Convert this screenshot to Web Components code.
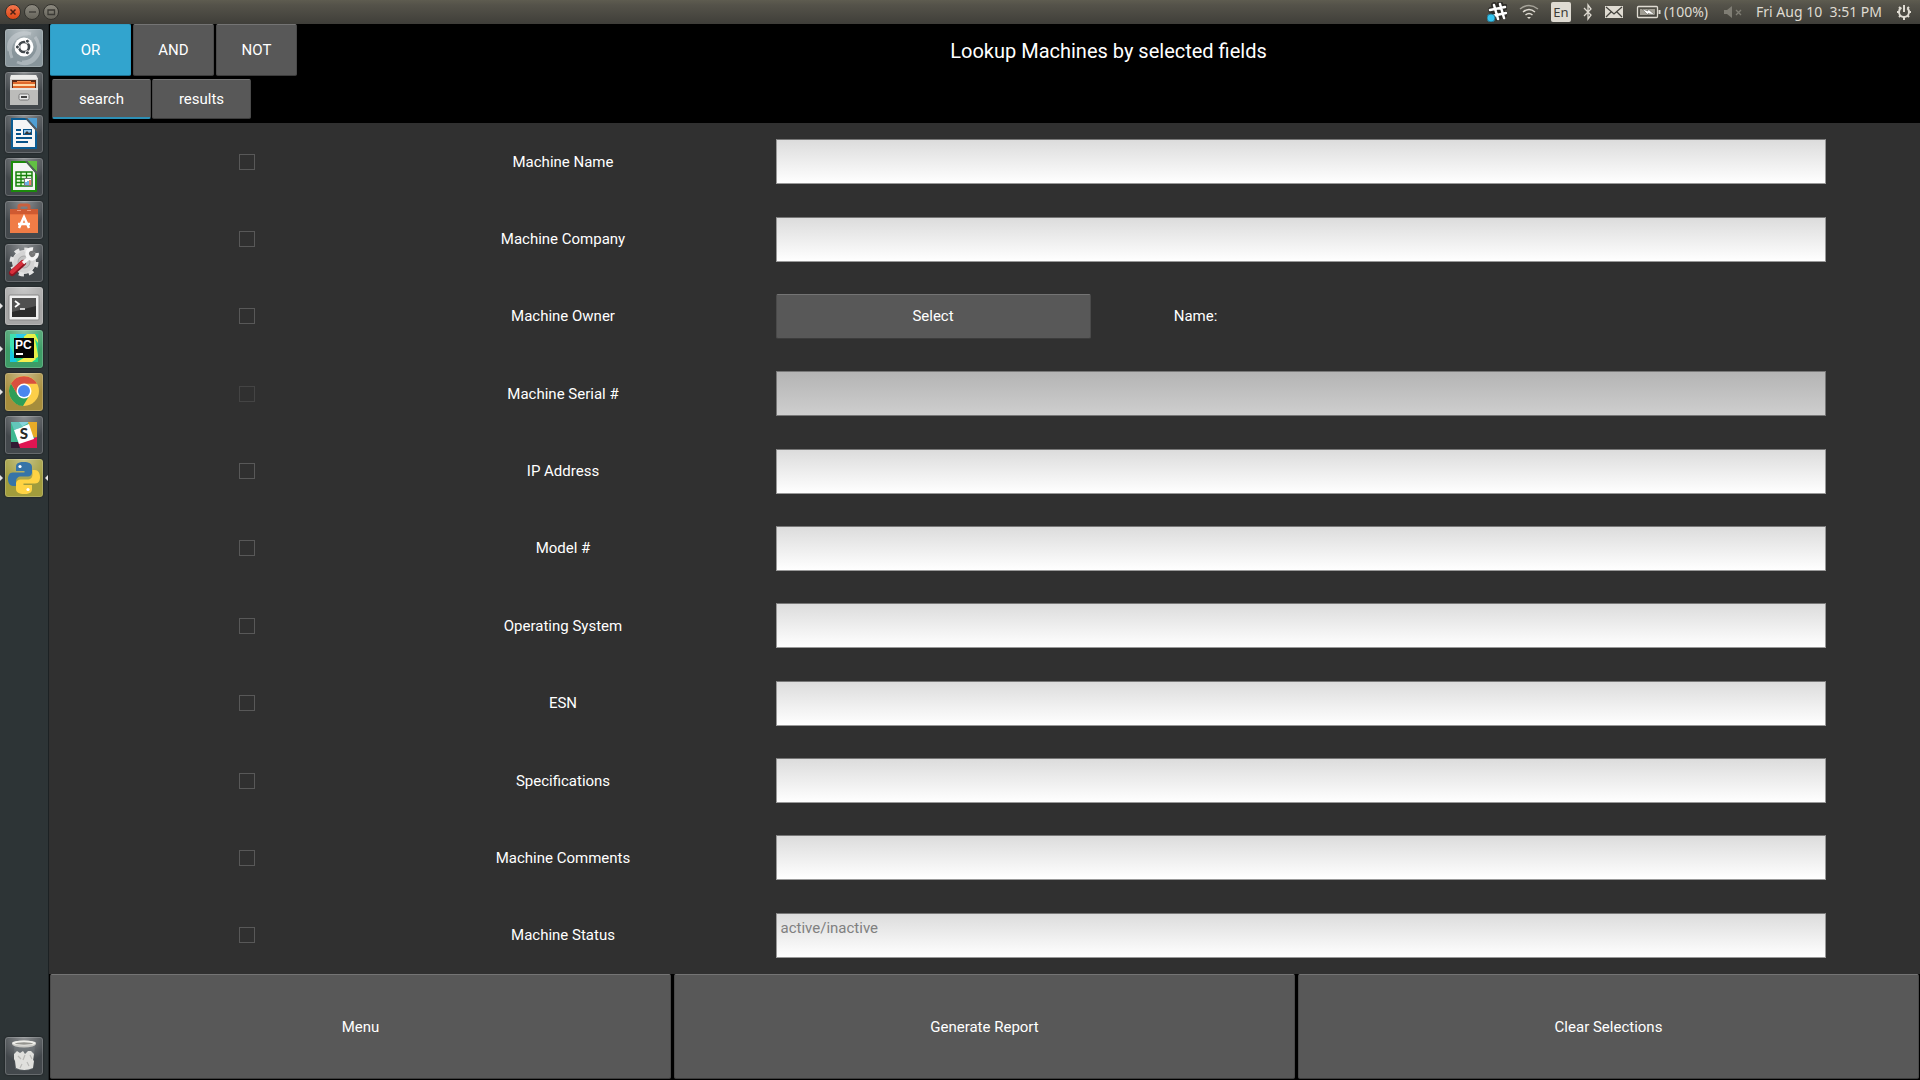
<!DOCTYPE html>
<html lang="en">
<head>
<meta charset="utf-8">
<title>Lookup Machines</title>
<style>
  html, body { margin: 0; height: 100%; background: #000; }
  body { font-family: Roboto, "Liberation Sans", sans-serif; font-size: 15px; line-height: 20px; color: #fff; }
</style>
</head>
<body>
<desktop-shell>
  <system-panel slot="panel"></system-panel>
  <app-launcher slot="launcher"></app-launcher>
  <lookup-screen></lookup-screen>
</desktop-shell>

<script>
const define = (name, html, setup) => {
  const template = document.createElement('template');
  template.innerHTML = html;
  customElements.define(name, class extends HTMLElement {
    constructor() {
      super();
      this.attachShadow({ mode: 'open' }).append(template.content.cloneNode(true));
    }
    connectedCallback() {
      if (setup && !this.ready) { this.ready = true; setup(this, this.shadowRoot); }
    }
  });
};

/* Launcher artwork, drawn on a 38 unit tile */
const office = (main, light, body) => `
  <path d="M7 4H22L31 14V33H7Z" fill="#f5f5f5" stroke="${main}" stroke-width="2"/>
  <path d="M22 3H32V14Z" fill="${light}"/><path d="M22 3L32 14V17L20 3Z" fill="#555b60"/>${body}`;
const art = {
  ubuntu: `<path d="M4 22C1 9 13 1 26 5M12 33C25 39 37 28 34 15M7 29C1 15 12 4 23 5M30 8C39 20 28 34 17 33" fill="none" stroke="#d4dadd" stroke-opacity=".45" stroke-width="3"/>
    <circle cx="19" cy="18" r="9.5" fill="#fff"/><circle cx="19" cy="18" r="5" fill="none" stroke="#42484d" stroke-width="2.6"/>
    <g fill="#42484d" stroke="#fff" stroke-width="1"><circle cx="12.4" cy="18" r="2"/><circle cx="22.4" cy="12.2" r="2"/><circle cx="22.4" cy="23.8" r="2"/></g>`,
  files: `<path d="M6 3H31L33 7V33H5V7Z" fill="#cfcfcd"/><path d="M5 16H33V33H5Z" fill="#bcbcba"/><path d="M6 3H31L33 7H5Z" fill="#ececea"/>
    <path d="M7 8H31V16H7Z" fill="#5a2a18"/><path d="M8 10H30V16H8Z" fill="#e0682c"/><path d="M8 12H30V14H8Z" fill="#ffd9a8"/><path d="M12 9H26V10H12Z" fill="#f59253"/>
    <path d="M5 16H33V18H5Z" fill="#e4e4e2"/><rect x="14" y="22" width="10" height="6" rx="1.5" fill="#e9e9e9" stroke="#777" /><path d="M16 24H22V26H16Z" fill="#444"/>`,
  writer: office('#0a5c93', '#4f9fd4', `<path d="M11 15H16M11 19H16M11 23H27M11 27H23" stroke="#06538a" stroke-width="2"/><rect x="18.500" y="14.500" width="8" height="5" fill="#8fc3ea" stroke="#06538a"/><path d="M19 19L22 16L24 18L26 17V19Z" fill="#333"/>`),
  calc: office('#1c8a0c', '#62c043', `<path d="M11 14H27V28H11Z" fill="#e4ffd9" stroke="#15800a" stroke-width="1.500"/><path d="M11 17.500H27M11 21H27M11 24.500H27M16 14V28M21.500 14V28" stroke="#15800a" stroke-width="1.300"/><rect x="19.500" y="20.500" width="7" height="7" fill="#fff" stroke="#777"/><path d="M21 24V27M23 23V27" stroke="#3a94dc" stroke-width="1.500"/><path d="M25 22V27" stroke="#e5602c" stroke-width="1.500"/>`),
  software: `<path d="M14 11V5Q14 4 16 4H22Q24 4 24 5V11" fill="none" stroke="#c95f3d" stroke-width="3"/><path d="M5 8H33V32H5Z" fill="#e9703d"/><path d="M5 8H33V13H5Z" fill="#cf5a31"/><path d="M5 14H33V32H5Z" fill="#f07c46"/>
    <path d="M14 9V10M24 9V10" stroke="#ef9878" stroke-width="4"/><path d="M14 27L19 16L24 27M13 23H25" fill="none" stroke="#fff" stroke-width="2.500"/>`,
  settings: `<circle cx="19" cy="18" r="11.500" fill="#d4d4d4" stroke="#dedede" stroke-width="1"/><circle cx="19" cy="18" r="12.500" fill="none" stroke="#e4e4e4" stroke-width="4" stroke-dasharray="5 4.800"/><circle cx="19" cy="18" r="6" fill="#c2c2c2" stroke="#a8a8a8"/>
    <path d="M7 29L18 19" stroke="#8e1420" stroke-width="6" stroke-linecap="round"/><path d="M7 28L18 18" stroke="#d7303c" stroke-width="4" stroke-linecap="round"/>
    <path d="M18 19L25 13" stroke="#f4f4f4" stroke-width="3.500"/><path d="M29 5L25 9L27 12L31 9" fill="none" stroke="#777" stroke-width="3"/><path d="M28 5A5 5 0 1 0 32 9" fill="none" stroke="#f4f4f4" stroke-width="3.500"/>`,
  terminal: `<rect x="4" y="8" width="30" height="25" rx="1" fill="#eee" stroke="#888"/><rect x="7" y="11" width="24" height="19" fill="#2b2b2b"/><path d="M7 11H31V19L7 25Z" fill="#505050"/><path d="M10 14L14 17L10 20" fill="none" stroke="#fff" stroke-width="1.700"/><path d="M15 22H20" stroke="#fff" stroke-width="1.500"/>`,
  pycharm: `<rect x="5" y="4" width="28" height="28" fill="#21d789"/><path d="M5 4H16L8 32H5Z" fill="#3fe0b0"/><path d="M18 4H30L33 10V27L25 32Z" fill="#e6ef47"/><path d="M5 16L12 32H5Z" fill="#18c7e0"/><path d="M11 4H22L12 13Z" fill="#2fcaea"/><path d="M12 32L22 26L31 29L27 32Z" fill="#f5ef50"/><path d="M30 9L33 13V25Z" fill="#2ad88f"/>
    <rect x="9" y="8" width="20" height="20" fill="#050505"/><text x="10" y="19" font-family="Liberation Sans, sans-serif" font-weight="700" font-size="12" fill="#fff">PC</text><path d="M11 24H18" stroke="#fff" stroke-width="2"/>`,
  chrome: `<circle cx="19" cy="18" r="15" fill="#fdcf49"/><path d="M6 10.500A15 15 0 0 0 18 33L25 21.500L19 18L12.500 21.500Z" fill="#2f9e57"/><path d="M6 10.500A15 15 0 0 1 32 10.800H19L12.500 21.500Z" fill="#d8503f"/><circle cx="19" cy="18" r="7.500" fill="#fff"/><circle cx="19" cy="18" r="6" fill="#4a86ee"/>`,
  slack: `<rect x="6" y="6" width="26" height="26" fill="#3eb890"/><path d="M6 6H25L11 14Z" fill="#86d3dd"/><path d="M23 6H32V22L27 20Z" fill="#e8ab28"/><path d="M13 27L32 21V32H13Z" fill="#df1552"/><path d="M6 26L13 26L15 32H6Z" fill="#321a34"/><path d="M9 14L24 8L29 23L14 28Z" fill="#fff"/>
    <path d="M6 6H14L18 11L9 14Z" fill="#63c6ba"/><text x="19" y="23" text-anchor="middle" font-family="Lato, sans-serif" font-weight="900" font-size="15" fill="#2a2a2a">S</text>`,
  python: `<path d="M18.500 3C12 3 11 5.500 11 8V12H19.500V13.500H8C4 13.500 3 17 3 20C3 24 5 27 8 27H11V22.500C11 19.500 13 17.500 16 17.500H23C25.500 17.500 27 15.800 27 13.500V8C27 4.500 24 3 18.500 3Z" fill="#3674a8"/>
    <path d="M19.500 35C26 35 27 32.500 27 30V26H18.500V24.500H30C34 24.500 35 21 35 18C35 14 33 11 30 11H27.500V15.500C27.500 18.500 25.500 20.500 22.500 20.500H15.500C13 20.500 11 22.200 11 24.500V30C11 33.500 14 35 19.500 35Z" fill="#ffd343"/><circle cx="15" cy="7.500" r="1.600" fill="#fff"/><circle cx="23" cy="30.500" r="1.600" fill="#fff"/>`,
  trash: `<path d="M9 8H30L28 32Q19 35 10 32Z" fill="#7b8184" fill-opacity=".45"/><path d="M9 17L12 14L15 16L18 14L20 17L23 14L26 14L29 17L28 23L29 24L28 31Q19 35 11 31L10 24L9 22Z" fill="#e0e0dd"/><path d="M13 19L16 22M20 18L18 23M25 18L27 22M17 27L15 31M22 25L24 29" fill="none" stroke="#b9b9b6" stroke-width="1.200"/>
    <ellipse cx="19" cy="7" rx="12" ry="3.500" fill="#c8c8c4"/><ellipse cx="19" cy="6" rx="12" ry="2.500" fill="#eeeeea"/><ellipse cx="19" cy="6.500" rx="9" ry="1.200" fill="#94948f"/>`
};

define('desktop-shell', `
<style>
  :host { display: flex; flex-direction: column; min-height: 100vh; background: #000; }
  .work { display: flex; flex: 1; }
  ::slotted(lookup-screen) { flex: 1; min-width: 0; }
</style>
<slot name="panel"></slot>
<div class="work"><slot name="launcher"></slot><slot></slot></div>`);

define('system-panel', `
<style>
  :host { display: flex; align-items: center; justify-content: space-between; box-sizing: border-box; height: 24px; padding: 0 8px 0 5px;
    background: linear-gradient(#5e5c50, #55534a 20%, #3f3e39); color: #dfdbd2; font: 14px/24px "Noto Sans", "Open Sans", sans-serif; }
  .windows, .status, .battery { display: flex; align-items: center; }
  .windows { gap: 3px; } .status { gap: 12px; } .battery { gap: 3px; }
  .battery span { min-width: 48px; }
  time { min-width: 128px; }
  .windows button { width: 16px; height: 16px; padding: 0; border: 1px solid #34332e; border-radius: 50%; background: linear-gradient(#8d8a80, #65635a); display: flex; }
  .windows button.close { background: linear-gradient(#f5774e, #dd4716); }
  .lang { width: 20px; height: 20px; border-radius: 2px; background: #dfdbd2; color: #3c3b37; text-align: center; line-height: 20px; font-size: 13px; }
  svg { display: block; fill: none; stroke: #dfdbd2; }
</style>
<div class="windows">
  <button class="close" aria-label="Close"><svg width="14" height="14" stroke-width="1.500" style="stroke:#4b2015"><path d="M4.500 4.500L9.500 9.500M9.500 4.500L4.500 9.500"/></svg></button>
  <button aria-label="Minimize"><svg width="14" height="14" stroke-width="1.300" style="stroke:#3b3a35"><path d="M4 7H11"/></svg></button>
  <button aria-label="Maximize"><svg width="14" height="14" stroke-width="1.300" style="stroke:#3b3a35"><path d="M4 5H10.500V9.500H4Z"/></svg></button>
</div>
<div class="status">
  <svg width="20" height="20" viewBox="0 0 20 20"><g style="stroke:#2e2d29" stroke-width="6" stroke-linecap="round"><path d="M7 3L11 16M13 2L16 14M4 8L18 5M5 14L18 12"/></g><g style="stroke:#fff" stroke-width="2.500" stroke-linecap="round"><path d="M7 3L11 17M13 2L17 16M3 8L18 5M5 14L19 11"/></g><circle cx="4" cy="16" r="4" style="fill:#34c5f0;stroke:#2b7a94"/></svg>
  <svg width="20" height="16" viewBox="0 0 20 16" stroke-width="1.500"><path style="stroke:#a6a399" d="M1 5Q10 -2 19 5"/><path d="M4 8Q10 3 16 8M6.500 11Q10 8 13.500 11"/><path d="M8 13H12L10 15Z" style="fill:#dfdbd2;stroke:none"/></svg>
  <span class="lang">En</span>
  <svg width="10" height="18" viewBox="0 0 10 18" stroke-width="1.300"><path d="M1 5L8 12L5 16V2L8 6L1 13"/></svg>
  <svg width="18" height="14" viewBox="0 0 18 14"><path d="M0 1H18V13H0Z" style="fill:#dfdbd2;stroke:none"/><path style="stroke:#45443e" stroke-width="1.300" d="M1 2L9 9L17 2M1 12L6 7M17 12L12 7"/></svg>
  <div class="battery">
    <svg width="26" height="14" viewBox="0 0 26 14"><rect x="2.500" y="1.500" width="20" height="11" rx="1" stroke-width="1.300"/><path d="M24.500 5V9" stroke-width="2"/><rect x="5" y="4" width="15" height="6" style="fill:#a09d93;stroke:none"/><path d="M7 4L13 6V4L20 10L13 8.500V10Z" style="fill:#fff;stroke:#55534a" stroke-width=".5"/></svg>
    <span>(100%)</span>
  </div>
  <svg width="20" height="14" viewBox="0 0 20 14" stroke-width="1.400" style="stroke:#7f7d74"><path d="M0 5H3L8 1V13L3 9H0Z" style="fill:#7f7d74;stroke:none"/><path d="M12 5L17 10M17 5L12 10"/></svg>
  <time>Fri Aug 10&nbsp; 3:51 PM</time>
  <svg width="16" height="18" viewBox="0 0 16 18"><circle cx="8" cy="9" r="5" stroke-width="2" stroke-dasharray="24.400 7" stroke-dashoffset="-3.500" transform="rotate(-90 8 9)"/><path stroke-width="2" d="M8 2V9M1 9H3M13 9H15M8 14V17M3 4L4.500 5.500M13 4L11.500 5.500M3 14L4.500 12.500M13 14L11.500 12.500"/></svg>
</div>`);

define('launcher-tile', `
<style>
  :host { display: block; position: relative; padding: 0 6px 0 5px; }
  button { display: block; width: 38px; height: 38px; padding: 0; border: 0; border-radius: 3px; overflow: hidden;
    background: radial-gradient(circle at 50% 0, #ffffff66, #ffffff00 60%), var(--tile, #43484c); box-shadow: inset 0 0 0 1px #ffffff30, 0 0 2px #0008; }
  svg { display: block; width: 38px; height: 38px; }
  i { display: none; position: absolute; top: 16px; border: 3px solid transparent; }
  :host([running]) .run { display: block; left: 0; border-left-color: #e4e4e4; }
  :host([focused]) .focus { display: block; right: 0; border-right-color: #e4e4e4; }
</style>
<i class="run"></i><button></button><i class="focus"></i>`, (host, root) => {
  const b = root.querySelector('button');
  b.innerHTML = `<svg viewBox="0 0 38 38" aria-hidden="true">${art[host.getAttribute('icon')]}</svg>`;
  b.setAttribute('aria-label', host.getAttribute('label'));
});

define('app-launcher', `
<style>
  :host { display: flex; flex-direction: column; justify-content: space-between; box-sizing: border-box; width: 49px; padding: 5px 0; background: linear-gradient(#252a2c, #2d3436 40px, #2d3436); border-right: 1px solid #1c2123; }
  nav { display: flex; flex-direction: column; gap: 5px; }
</style>
<nav>
  <launcher-tile icon="ubuntu" label="Dash" style="--tile:#88959b"></launcher-tile>
  <launcher-tile icon="files" label="Files"></launcher-tile>
  <launcher-tile icon="writer" label="Writer"></launcher-tile>
  <launcher-tile icon="calc" label="Calc"></launcher-tile>
  <launcher-tile icon="software" label="Software"></launcher-tile>
  <launcher-tile icon="settings" label="Settings"></launcher-tile>
  <launcher-tile icon="terminal" label="Terminal" running style="--tile:#a6a6a6"></launcher-tile>
  <launcher-tile icon="pycharm" label="PyCharm" running style="--tile:#3d9c66"></launcher-tile>
  <launcher-tile icon="chrome" label="Chrome" running style="--tile:#a68d3c"></launcher-tile>
  <launcher-tile icon="slack" label="Slack"></launcher-tile>
  <launcher-tile icon="python" label="Python" running focused style="--tile:#a19c3c"></launcher-tile>
</nav>
<launcher-tile icon="trash" label="Trash"></launcher-tile>`);

define('flat-button', `
<style>
  :host { display: flex; }
  button { flex: 1; padding: 0; margin: 0; font: inherit; color: inherit; background: #585858; border: 1px solid #4a4a4a; border-top-color: #747474; border-bottom-color: #3c3c3c; border-radius: 2px; }
  :host([active]) button { background: #32a4ce; border-color: #2f9cc4; border-bottom-color: #1d6f8f; }
  :host([current]) button { border-bottom: 2px solid #2d8fb5; }
</style>
<button type="button"><slot></slot></button>`);

define('field-row', `
<style>
  :host { display: grid; grid-template-columns: 396fr 236fr 1239fr; align-items: center; justify-items: center; flex: 1; --field: calc(100% - 189px); }
  input[type=checkbox] { appearance: none; box-sizing: border-box; width: 16px; height: 16px; margin: 0; border: 1px solid #585858; }
  textarea { display: block; box-sizing: border-box; width: var(--field); height: 45px; margin: 0; padding: 4px; resize: none; overflow: hidden;
    font: inherit; color: #000; border: 1px solid #999; border-top-color: #777; border-radius: 0; background: linear-gradient(#dcdcdc, #fff); }
  textarea::placeholder { color: #808080; opacity: 1; }
  :host([disabled]) textarea { background: linear-gradient(#b4b4b4, #cecece); border-color: #777; }
  :host([disabled]) input { border-color: #444; }
  .pick { display: grid; grid-template-columns: 3fr 2fr 5fr; align-items: center; width: var(--field); }
  .pick flat-button { height: 45px; }
  .pick span { text-align: center; }
</style>
<input type="checkbox" id="use" aria-labelledby="name">
<label id="name" for="value"><slot></slot></label>
<textarea id="value" rows="1"></textarea>`, (host, root) => {
  const box = root.querySelector('textarea');
  if (host.hasAttribute('picker')) {
    const pick = document.createElement('div');
    pick.className = 'pick';
    pick.innerHTML = '<flat-button>Select</flat-button><span>Name:</span>';
    box.replaceWith(pick);
    root.querySelector('label').htmlFor = 'use';
    return;
  }
  box.placeholder = host.getAttribute('hint') || '';
  if (host.hasAttribute('disabled')) root.querySelectorAll('input, textarea').forEach(e => e.disabled = true);
});

define('lookup-screen', `
<style>
  :host { display: flex; flex-direction: column; background: #000; }
  header { display: flex; align-items: center; height: 52px; padding-left: 1px; }
  .modes { display: flex; gap: 2px; }
  .modes flat-button { width: 81px; height: 52px; }
  h1 { flex: 1; margin: 0; font-size: 20px; line-height: 24px; padding-top: 2px; font-weight: 400; text-align: center; }
  .tabs { display: flex; gap: 1px; padding: 3px 3px 4px; }
  .tabs flat-button { width: 99px; height: 40px; }
  form { display: flex; flex-direction: column; flex: 1; background: #303030; }
  footer { display: grid; grid-template-columns: repeat(3, 1fr); gap: 3px; padding: 0 1px 1px; }
  footer flat-button { height: 105px; }
</style>
<header>
  <div class="modes"><flat-button active>OR</flat-button><flat-button>AND</flat-button><flat-button>NOT</flat-button></div>
  <h1>Lookup Machines by selected fields</h1>
</header>
<div class="tabs"><flat-button current>search</flat-button><flat-button>results</flat-button></div>
<form>
  <field-row>Machine Name</field-row>
  <field-row>Machine Company</field-row>
  <field-row picker>Machine Owner</field-row>
  <field-row disabled>Machine Serial #</field-row>
  <field-row>IP Address</field-row>
  <field-row>Model #</field-row>
  <field-row>Operating System</field-row>
  <field-row>ESN</field-row>
  <field-row>Specifications</field-row>
  <field-row>Machine Comments</field-row>
  <field-row hint="active/inactive">Machine Status</field-row>
</form>
<footer><flat-button>Menu</flat-button><flat-button>Generate Report</flat-button><flat-button>Clear Selections</flat-button></footer>`);
</script>
</body>
</html>
